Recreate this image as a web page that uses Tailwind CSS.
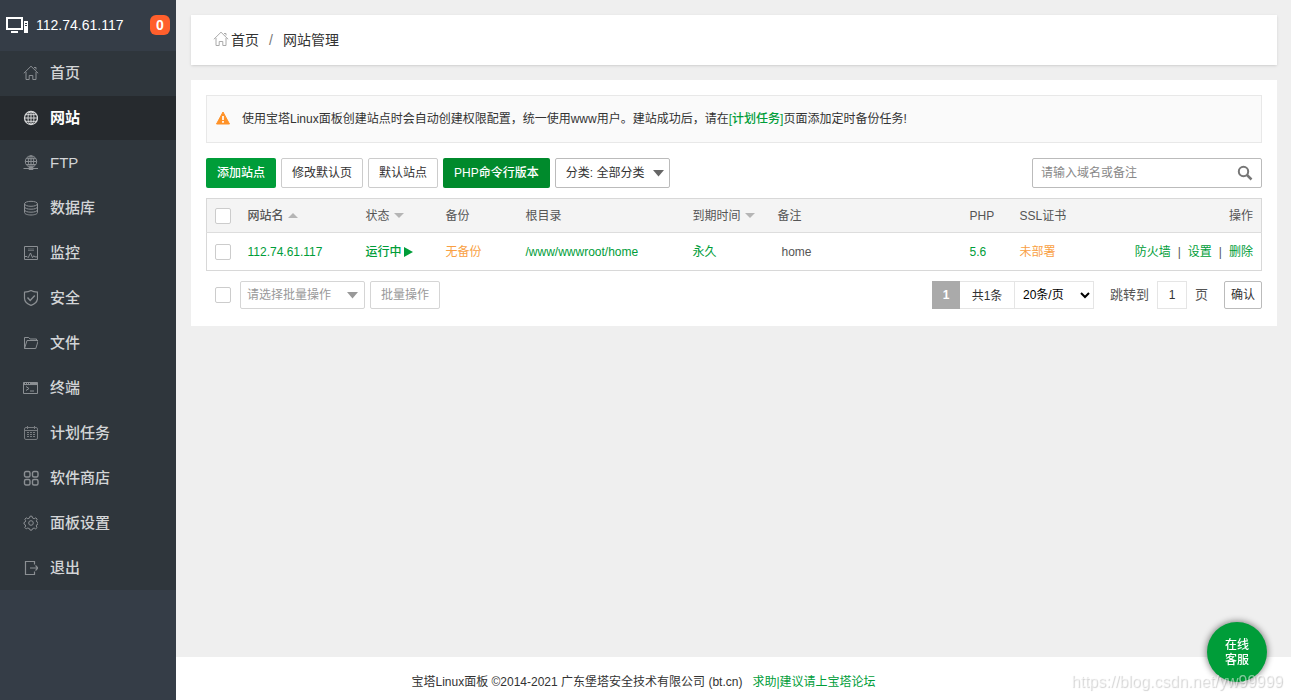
<!DOCTYPE html>
<html lang="zh-CN">
<head>
<meta charset="utf-8">
<meta name="viewport" content="width=device-width, initial-scale=1">
<title>网站管理</title>
<script src="https://cdn.jsdelivr.net/npm/@tailwindcss/browser@4"></script>
</head>
<body class="flex min-h-screen bg-[#efefef] font-['Liberation_Sans','Noto_Sans_CJK_SC',sans-serif] text-xs text-[#333]">

<aside class="w-44 shrink-0 bg-[#353d47]">
  <div class="flex h-[51px] items-center pr-1.5 pb-px pl-1.5 text-sm text-white">
    <svg class="mr-2 h-4 w-[22px]" viewBox="0 0 22 16" fill="none" stroke="#fff"><rect x="1" y="1" width="15" height="11" stroke-width="2"/><path d="M5 15h7" stroke-width="2"/><path d="M18 4h4v12h-4z" fill="#fff" stroke="none"/><path d="M19 6.500h2M19 8.500h2" stroke="#353d47"/></svg>
    <span class="flex-1 font-medium">112.74.61.117</span>
    <button class="h-5 w-5 rounded-md bg-[#ff5f2c] text-sm leading-5 font-bold text-white" aria-label="消息 0">0</button>
  </div>
  <nav class="bg-[#2f363c] text-[15px] font-medium text-[#d3d5d7]" aria-label="主菜单">
    <a href="#" class="flex h-[45px] items-center gap-3 pb-px pl-[23px]"><svg class="h-4 w-4" viewBox="0 0 16 16" fill="none" stroke="#8b8f93"><path d="M.8 8.300 8 1.200l7.200 7.100M3 7v7.500h3.200v-4h3.600v4H13V7M11 2.500h2v2"/></svg><span class="-ml-px">首页</span></a>
    <a href="#" aria-current="page" class="flex h-11 items-center gap-3 bg-[#262a2e] pl-[22px] font-bold text-white"><svg class="h-4 w-4" viewBox="0 0 16 16" fill="none" stroke="#d5d6d7"><circle cx="9" cy="8" r="6.500" stroke-width="1.300"/><ellipse cx="9" cy="8" rx="3" ry="6.500"/><path d="M9 1.500v13M2.500 8h13M3.500 4.700h11M3.500 11.300h11"/></svg>网站</a>
    <a href="#" class="flex h-[45px] items-center gap-3 pl-[22px]"><svg class="h-4 w-4" viewBox="0 0 16 16" fill="none" stroke="#8b8f93"><circle cx="9" cy="6.500" r="5.700"/><ellipse cx="9" cy="6.500" rx="2.700" ry="5.700"/><path d="M9 1v13M3.300 6.500h11.400M4.300 3.700h9.400M4.300 9.500h9.400M1.500 13.500h15"/><path d="M7 12.500h4v2H7z" fill="#8b8f93"/></svg>FTP</a>
    <a href="#" class="flex h-[45px] items-center gap-3 pl-[22px]"><svg class="h-4 w-4" viewBox="0 0 16 16" fill="none" stroke="#8b8f93"><ellipse cx="9" cy="3.800" rx="6.500" ry="2.500"/><path d="M2.500 3.800v8.700C2.500 14 5.500 15 9 15s6.500-1 6.500-2.500V3.800M2.500 6.800c0 3.200 13 3.200 13 0M2.500 9.800c0 3.200 13 3.200 13 0"/></svg>数据库</a>
    <a href="#" class="flex h-[45px] items-center gap-3 pl-[22px]"><svg class="h-4 w-4" viewBox="0 0 16 16" fill="none" stroke="#8b8f93"><path d="M2.500 1.500h13v13h-13zM3 11.500h2l1.200 1.200L8.500 8l2 4.700 1.300-2 1 1.200H15"/><path d="M6 4h6M6 5.500h6" stroke="#656a6f"/></svg>监控</a>
    <a href="#" class="flex h-[45px] items-center gap-3 pl-[22px]"><svg class="h-4 w-4" viewBox="0 0 16 16" fill="none" stroke="#8b8f93"><path d="M9 .6c2 1.200 4.200 1.500 6.500 1.600v6c0 3.500-2.800 5.800-6.500 7.200C5.300 14 2.500 11.700 2.500 8.200v-6C4.800 2.100 7 1.800 9 .6Z" stroke-width="1.200"/><path d="m5.500 7.500 2.700 3L12.800 5.500" stroke-width="1.400"/></svg>安全</a>
    <a href="#" class="flex h-[45px] items-center gap-3 pl-[22px]"><svg class="h-4 w-4" viewBox="0 0 16 16" fill="none" stroke="#8b8f93"><path d="M2.500 12.500v-10h4.200l1.400 1.500h6.400v2M2.500 13.500 5 5.500h11.300l-2.500 8H2.500v-2"/></svg>文件</a>
    <a href="#" class="flex h-[45px] items-center gap-3 pl-[22px]"><svg class="h-4 w-4" viewBox="0 0 16 16" fill="none" stroke="#8b8f93"><path d="M1.500 2.500h14v11h-14zM4 6.500l3 2-3 2M8 11h4"/><path d="M1.500 3.800h14" stroke-width="2.500"/><path d="M3 3.500h1M5 3.500h1M7 3.500h1" stroke="#2f363c"/></svg>终端</a>
    <a href="#" class="flex h-[45px] items-center gap-3 pl-[22px]"><svg class="h-4 w-4" viewBox="0 0 16 16" fill="none" stroke="#787c80"><rect x="2.500" y="2.500" width="13" height="12" rx="1.500"/><path d="M5.500 1v3M12.500 1v3M3 5.500h12M5 7.500h2M8 7.500h2M11 7.500h2M5 9.500h2M8 9.500h2M11 9.500h2M5 11.500h2M8 11.500h2M11 11.500h2"/></svg>计划任务</a>
    <a href="#" class="flex h-[45px] items-center gap-3 pl-[23px]"><svg class="h-4 w-4" viewBox="0 0 16 16" fill="none" stroke="#8b8f93" stroke-width="1.400"><rect x="1.500" y="1.500" width="5.500" height="5.500" rx="1.500"/><rect x="9.500" y="1.500" width="5.500" height="5.500" rx="1.500"/><rect x="1.500" y="9.500" width="5.500" height="5.500" rx="1.500"/><rect x="9.500" y="9.500" width="5.500" height="5.500" rx="1.500"/></svg><span class="-ml-px">软件商店</span></a>
    <a href="#" class="flex h-[45px] items-center gap-3 pl-[22px]"><svg class="h-4 w-4" viewBox="0 0 16 16" fill="none" stroke="#8b8f93"><circle cx="9" cy="8" r="2.300"/><path d="m7.500 3 .5-1.800h2l.5 1.800 1.700.7 1.600-.9 1.400 1.400-.9 1.600.5 1.200 1.200.5v1.600l-1.300.6-.5 1.300.9 1.500-1.400 1.400-1.600-.9-1.600.7-.5 1.400H8l-.5-1.400-1.700-.7-1.600.9-1.400-1.400.9-1.500-.5-1.300L2 9V7.500L3.200 7l.5-1.200-.9-1.600 1.400-1.400 1.600.9Z"/></svg>面板设置</a>
    <a href="#" class="flex h-[45px] items-center gap-3 pl-[22px]"><svg class="h-4 w-4" viewBox="0 0 16 16" fill="none" stroke="#8b8f93" stroke-width="1.200"><path d="M12.500 4.500v-3h-9v13h9v-3M8 8h8M13.500 5.500 16 8l-2.500 2.500"/></svg>退出</a>
  </nav>
</aside>

<div class="flex min-w-0 flex-1 flex-col">
  <main class="flex-1 pt-[15px] pr-3.5 pl-[15px]">
    <nav class="flex h-[50px] items-center bg-white pl-[22px] text-sm shadow-sm" aria-label="面包屑">
      <svg class="mr-0.5 mb-0.5 h-4 w-4" viewBox="0 0 16 16" fill="none" stroke="#aaa"><path d="M.8 8.300 8 1.200l7.200 7.100M3 7v7.500h3.200v-4h3.600v4H13V7M11 2.500h2v2"/></svg>
      <a href="#">首页</a><span class="mx-2.5 text-[#777]">/</span><span>网站管理</span>
    </nav>

    <section class="mt-[15px] bg-white p-[15px] pb-[17px]">
      <div class="flex h-12 items-center border border-[#e8e8e8] bg-[#fafafa] pl-[9px]">
        <svg class="mr-3 mb-0.5 h-3.5 w-3.5" viewBox="0 0 14 14"><path d="M7 1 13.500 13H.5z" fill="#ff9228" stroke="#ff9228" stroke-linejoin="round"/><path d="M7 5v4M7 10v1.700" stroke="#fff" stroke-width="1.700"/></svg>
        <p>使用宝塔Linux面板创建站点时会自动创建权限配置，统一使用www用户。建站成功后，请在<a href="#" class="font-medium text-[#009d39]">[计划任务]</a>页面添加定时备份任务!</p>
      </div>

      <div class="mt-[15px] flex items-center gap-[5px]">
        <button class="h-[30px] rounded-xs bg-[#009d39] px-[11px] font-medium text-white">添加站点</button>
        <button class="h-[30px] rounded-xs border border-[#ccc] px-2.5">修改默认页</button>
        <button class="h-[30px] rounded-xs border border-[#ccc] px-2.5">默认站点</button>
        <button class="h-[30px] rounded-xs bg-[#008a2c] px-[11px] font-medium text-white">PHP命令行版本</button>
        <div class="relative">
          <select class="h-[30px] w-[115px] appearance-none rounded-xs border border-[#bbb] pl-2.5" aria-label="分类"><option>分类: 全部分类</option></select>
          <svg class="pointer-events-none absolute top-3 right-1.5 h-[7px] w-[11px]" viewBox="0 0 11 7" fill="#666"><path d="M0 0h11L5.500 6.500z"/></svg>
        </div>
        <form class="ml-auto flex h-[30px] w-[230px] items-center rounded-xs border border-[#bbb] pr-2 pl-2">
          <input type="text" class="min-w-0 flex-1 outline-none placeholder:text-[#888]" placeholder="请输入域名或备注" aria-label="搜索">
          <button type="button" aria-label="搜索"><svg class="h-4 w-4" viewBox="0 0 16 16" fill="none" stroke="#777" stroke-width="2"><circle cx="6.500" cy="6.500" r="4.700"/><path d="m10 10 4.500 4.500" stroke-width="2.500"/></svg></button>
        </form>
      </div>

      <table class="mt-2.5 w-full table-fixed border border-[#d8d8d8] text-left">
        <colgroup><col class="w-[33px]"><col class="w-[118px]"><col class="w-20"><col class="w-20"><col class="w-[167px]"><col class="w-[85px]"><col><col class="w-[50px]"><col class="w-[90px]"><col class="w-[160px]"></colgroup>
        <thead class="bg-[#f4f4f4] text-[#555]">
          <tr class="h-[34px] border-b border-[#ddd] *:font-normal">
            <th class="pl-2"><input type="checkbox" class="block h-4 w-4 appearance-none rounded-xs border border-[#ccc] bg-white" aria-label="全选"></th>
            <th class="pl-2"><span class="flex items-center gap-1 font-medium">网站名<svg class="h-[5px] w-2.5" viewBox="0 0 10 5" fill="#b5b5b5"><path d="M0 5h10L5 0z"/></svg></span></th>
            <th class="pl-2"><span class="flex items-center gap-1">状态<svg class="h-[5px] w-2.5" viewBox="0 0 10 5" fill="#b5b5b5"><path d="M0 0h10L5 5z"/></svg></span></th>
            <th class="pl-2">备份</th>
            <th class="pl-2">根目录</th>
            <th class="pl-2"><span class="flex items-center gap-1">到期时间<svg class="h-[5px] w-2.5" viewBox="0 0 10 5" fill="#b5b5b5"><path d="M0 0h10L5 5z"/></svg></span></th>
            <th class="pl-2">备注</th>
            <th class="pl-2">PHP</th>
            <th class="pl-2">SSL证书</th>
            <th class="pr-2 text-right">操作</th>
          </tr>
        </thead>
        <tbody class="text-[#009d39]">
          <tr class="h-[38px]">
            <td class="pl-2"><input type="checkbox" class="block h-4 w-4 appearance-none rounded-xs border border-[#ccc] bg-white" aria-label="选择 112.74.61.117"></td>
            <td class="pl-2"><a href="#">112.74.61.117</a></td>
            <td class="pl-2"><a href="#" class="flex items-center font-medium">运行中<svg class="ml-0.5 h-2.5 w-[9px]" viewBox="0 0 9 10" fill="#009d39"><path d="M0 0v10l9-5z"/></svg></a></td>
            <td class="pl-2"><a href="#" class="text-[#f99f43]">无备份</a></td>
            <td class="pl-2"><a href="#">/www/wwwroot/home</a></td>
            <td class="pl-2"><a href="#">永久</a></td>
            <td class="pl-3 text-[#555]">home</td>
            <td class="pl-2"><a href="#">5.6</a></td>
            <td class="pl-2"><a href="#" class="text-[#f99f43]">未部署</a></td>
            <td class="pr-2 text-right whitespace-nowrap"><a href="#">防火墙</a><span class="mx-[7px] text-[#555]">|</span><a href="#">设置</a><span class="mx-[7px] text-[#555]">|</span><a href="#">删除</a></td>
          </tr>
        </tbody>
      </table>

      <div class="mt-2.5 flex h-7 items-center pl-[9px]">
        <input type="checkbox" class="mr-[9px] block h-4 w-4 appearance-none rounded-xs border border-[#ccc] bg-white" aria-label="全选">
        <div class="relative mr-[5px]">
          <select class="h-7 w-[125px] appearance-none rounded-xs border border-[#d5d5d5] pl-1.5 text-[#999]" aria-label="批量操作"><option>请选择批量操作</option></select>
          <svg class="pointer-events-none absolute top-[11px] right-[7px] h-[7px] w-[11px]" viewBox="0 0 11 7" fill="#999"><path d="M0 0h11L5.500 6.500z"/></svg>
        </div>
        <button class="h-7 rounded-xs border border-[#d5d5d5] px-2.5 text-[#999]">批量操作</button>
        <div class="ml-auto flex h-7 items-center">
          <span class="h-7 w-7 bg-[#aaa] text-center leading-7 font-bold text-white">1</span>
          <span class="h-7 w-[54px] border-y border-[#e5e5e5] text-center leading-7">共1条</span>
          <select class="h-7 w-20 border border-[#e5e5e5] bg-white pl-1 text-black" aria-label="每页条数"><option>20条/页</option></select>
          <label for="page" class="mr-2 ml-4 text-[13px] text-[#555]">跳转到</label>
          <input id="page" type="text" value="1" class="h-7 w-[30px] border border-[#e5e5e5] text-center">
          <span class="mr-4 ml-2 text-[13px] text-[#555]">页</span>
          <button class="h-7 w-[38px] rounded-xs border border-[#bbb]">确认</button>
        </div>
      </div>
    </section>
  </main>

  <footer class="flex h-[43px] items-center justify-center gap-2.5 bg-white pt-1.5 pr-[180px]">
    <span>宝塔Linux面板 ©2014-2021 广东堡塔安全技术有限公司 (bt.cn)</span><a href="#" class="text-[#009d39]">求助|建议请上宝塔论坛</a>
  </footer>
</div>

<button class="fixed right-6 bottom-[18px] h-[60px] w-[60px] rounded-full bg-[#009d39] pt-0.5 leading-[15px] font-medium text-white shadow-[0_0_6px_1px_rgba(0,0,0,0.45)]">在线<br>客服</button>
<span class="pointer-events-none fixed right-2 bottom-1.5 text-base text-white/50 [text-shadow:1px_1px_1px_rgba(0,0,0,0.18)]">https://blog.csdn.net/yw99999</span>
</body>
</html>
